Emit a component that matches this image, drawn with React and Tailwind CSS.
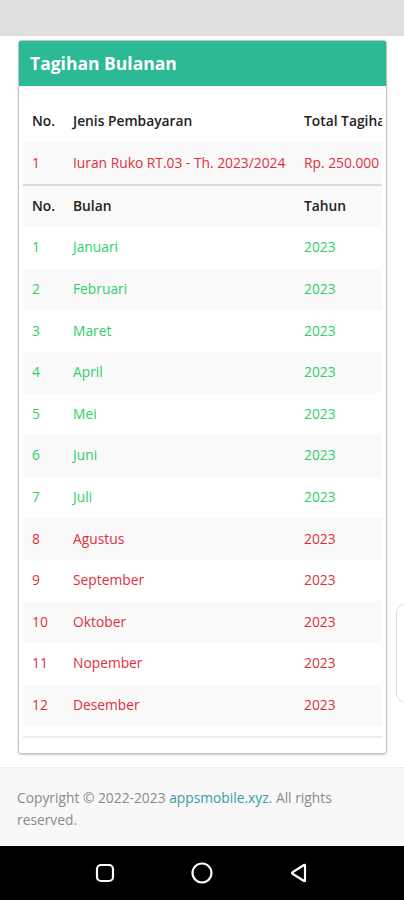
import React from 'react';

const months = [
  'Januari', 'Februari', 'Maret', 'April', 'Mei', 'Juni', 'Juli',
  'Agustus', 'September', 'Oktober', 'Nopember', 'Desember',
];
// months up to Juli are paid (green), the rest are due (red)
const paidUntil = 7;

const font = { fontFamily: '"Open Sans", "Liberation Sans", sans-serif' };

const Row = ({ cells, className }) => (
  <div className={`flex items-center h-[41.6px] w-[420px] ${className}`}>
    <div className="w-[41px] pl-[9px] shrink-0">{cells[0]}</div>
    <div className="w-[231px] pl-[9px] shrink-0 whitespace-nowrap">{cells[1]}</div>
    <div className="pl-[9px] whitespace-nowrap">{cells[2]}</div>
  </div>
);

export default function App() {
  return (
    <div className="relative w-[404px] h-[900px] bg-white flex flex-col overflow-hidden text-[13.8px]" style={font}>
      {/* top bar */}
      <div className="h-[36px] bg-[#e0e0e0] shrink-0" />

      {/* Card */}
      <div className="mt-[4px] ml-[18px] mr-[17px] border border-[#c4c4c4] rounded-[3px] shadow-[0_1px_2px_rgba(0,0,0,0.2)] overflow-hidden h-[714px] shrink-0 flex flex-col">
        <div className="h-[45px] bg-[#2cba94] flex items-center px-[11px] shrink-0">
          <h3 className="text-white font-bold text-[17.5px]">Tagihan Bulanan</h3>
        </div>
        <div className="px-[4px] pt-[14px] overflow-hidden flex-1">
          <div className="overflow-hidden">
            {/* first table */}
            <Row
              className="font-semibold text-[#222] h-[42px]"
              cells={['No.', 'Jenis Pembayaran', 'Total Tagihan']}
            />
            <Row
              className="bg-[#f9f9f9] text-[#de2f3d] h-[42px]"
              cells={['1', 'Iuran Ruko RT.03 - Th. 2023/2024', 'Rp. 250.000']}
            />
            <div className="h-[2px] bg-[#dcdcdc]" />

            {/* second table */}
            <Row className="bg-[#f9f9f9] font-semibold text-[#222] h-[41px]" cells={['No.', 'Bulan', 'Tahun']} />
            {months.map((m, i) => (
              <Row
                key={m}
                className={`${i % 2 === 1 ? 'bg-[#f9f9f9]' : 'bg-white'} ${
                  i < paidUntil ? 'text-[#2fcf66]' : 'text-[#de2f3d]'
                }`}
                cells={[String(i + 1), m, '2023']}
              />
            ))}
            <div className="h-[10px]" />
            <div className="h-[2px] bg-[#ececec]" />
          </div>
        </div>
      </div>

      {/* Footer */}
      <div className="mt-[13px] flex-1 bg-[#f8f8f8] border-t border-[#eeeeee] px-[17px] pt-[19px] text-[#8a8a8a] leading-[22px]">
        Copyright © 2022-2023 <span className="text-[#3a9aa8]">appsmobile.xyz</span>. All rights reserved.
      </div>

      {/* Android nav bar */}
      <div className="h-[54px] bg-black shrink-0 flex items-center justify-center gap-[74px]">
        <svg width="22" height="22" viewBox="0 0 22 22">
          <rect x="3" y="3" width="16" height="16" rx="4" fill="none" stroke="white" strokeWidth="2.2" />
        </svg>
        <svg width="24" height="24" viewBox="0 0 24 24">
          <circle cx="12" cy="12" r="9.5" fill="none" stroke="white" strokeWidth="2.2" />
        </svg>
        <svg width="22" height="22" viewBox="0 0 22 22">
          <path d="M17 3.5 L17 18.5 Q17 19.5 16 19 L4.5 11.8 Q3.6 11 4.5 10.2 L16 3 Q17 2.5 17 3.5 Z" fill="none" stroke="white" strokeWidth="2.2" strokeLinejoin="round" />
        </svg>
      </div>

      {/* floating widget partly off-screen */}
      <div className="absolute left-[396px] top-[603px] w-[30px] h-[100px] border border-[#dddddd] rounded-[10px] bg-white" />
    </div>
  );
}
